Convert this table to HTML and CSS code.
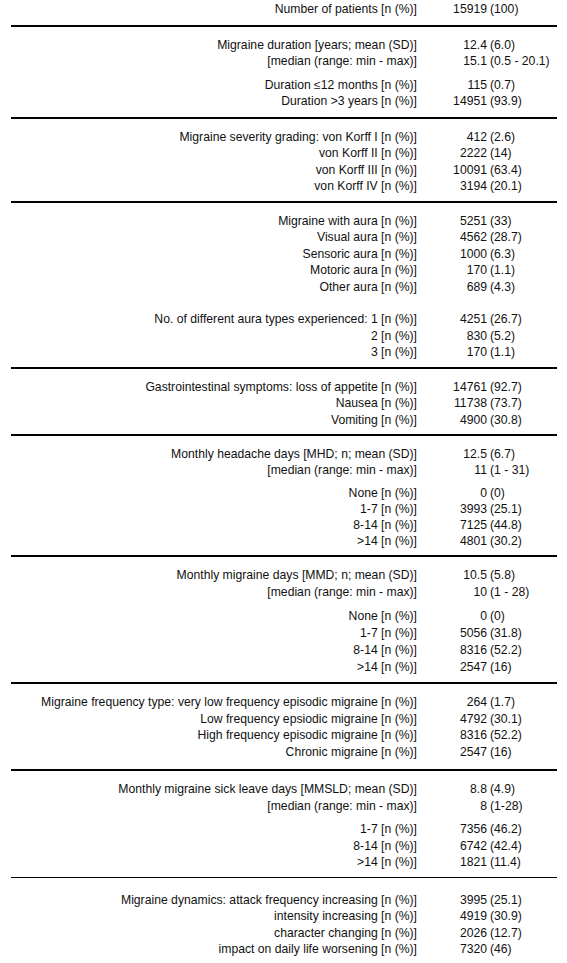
FILE: index.html
```html
<!DOCTYPE html>
<html>
<head>
<meta charset="utf-8">
<link rel="stylesheet" href="styles.css">
</head>
<body>
<div class="table">
  <section class="grp first">
    <div class="row"><span class="lbl">Number of patients [n (%)]</span><span class="num">15919</span><span class="par">(100)</span></div>
  </section>
  <section class="grp duration">
    <div class="row"><span class="lbl">Migraine duration [years; mean (SD)]</span><span class="num">12.4</span><span class="par">(6.0)</span></div>
    <div class="row"><span class="lbl">[median (range: min - max)]</span><span class="num">15.1</span><span class="par">(0.5 - 20.1)</span></div>
    <div class="gap"></div>
    <div class="row"><span class="lbl">Duration ≤12 months [n (%)]</span><span class="num">115</span><span class="par">(0.7)</span></div>
    <div class="row"><span class="lbl">Duration &gt;3 years [n (%)]</span><span class="num">14951</span><span class="par">(93.9)</span></div>
  </section>
  <section class="grp">
    <div class="row"><span class="lbl">Migraine severity grading: von Korff I [n (%)]</span><span class="num">412</span><span class="par">(2.6)</span></div>
    <div class="row"><span class="lbl">von Korff II [n (%)]</span><span class="num">2222</span><span class="par">(14)</span></div>
    <div class="row"><span class="lbl">von Korff III [n (%)]</span><span class="num">10091</span><span class="par">(63.4)</span></div>
    <div class="row"><span class="lbl">von Korff IV [n (%)]</span><span class="num">3194</span><span class="par">(20.1)</span></div>
  </section>
  <section class="grp">
    <div class="row"><span class="lbl">Migraine with aura [n (%)]</span><span class="num">5251</span><span class="par">(33)</span></div>
    <div class="row"><span class="lbl">Visual aura [n (%)]</span><span class="num">4562</span><span class="par">(28.7)</span></div>
    <div class="row"><span class="lbl">Sensoric aura [n (%)]</span><span class="num">1000</span><span class="par">(6.3)</span></div>
    <div class="row"><span class="lbl">Motoric aura [n (%)]</span><span class="num">170</span><span class="par">(1.1)</span></div>
    <div class="row"><span class="lbl">Other aura [n (%)]</span><span class="num">689</span><span class="par">(4.3)</span></div>
    <div class="gap big"></div>
    <div class="row"><span class="lbl">No. of different aura types experienced: 1 [n (%)]</span><span class="num">4251</span><span class="par">(26.7)</span></div>
    <div class="row"><span class="lbl">2 [n (%)]</span><span class="num">830</span><span class="par">(5.2)</span></div>
    <div class="row"><span class="lbl">3 [n (%)]</span><span class="num">170</span><span class="par">(1.1)</span></div>
  </section>
  <section class="grp">
    <div class="row"><span class="lbl">Gastrointestinal symptoms: loss of appetite [n (%)]</span><span class="num">14761</span><span class="par">(92.7)</span></div>
    <div class="row"><span class="lbl">Nausea [n (%)]</span><span class="num">11738</span><span class="par">(73.7)</span></div>
    <div class="row"><span class="lbl">Vomiting [n (%)]</span><span class="num">4900</span><span class="par">(30.8)</span></div>
  </section>
  <section class="grp tight">
    <div class="row"><span class="lbl">Monthly headache days [MHD; n; mean (SD)]</span><span class="num">12.5</span><span class="par">(6.7)</span></div>
    <div class="row"><span class="lbl">[median (range: min - max)]</span><span class="num">11</span><span class="par">(1 - 31)</span></div>
    <div class="gap"></div>
    <div class="row"><span class="lbl">None [n (%)]</span><span class="num">0</span><span class="par">(0)</span></div>
    <div class="row"><span class="lbl">1-7 [n (%)]</span><span class="num">3993</span><span class="par">(25.1)</span></div>
    <div class="row"><span class="lbl">8-14 [n (%)]</span><span class="num">7125</span><span class="par">(44.8)</span></div>
    <div class="row"><span class="lbl">&gt;14 [n (%)]</span><span class="num">4801</span><span class="par">(30.2)</span></div>
  </section>
  <section class="grp loose">
    <div class="row"><span class="lbl">Monthly migraine days [MMD; n; mean (SD)]</span><span class="num">10.5</span><span class="par">(5.8)</span></div>
    <div class="row"><span class="lbl">[median (range: min - max)]</span><span class="num">10</span><span class="par">(1 - 28)</span></div>
    <div class="gap"></div>
    <div class="row"><span class="lbl">None [n (%)]</span><span class="num">0</span><span class="par">(0)</span></div>
    <div class="row"><span class="lbl">1-7 [n (%)]</span><span class="num">5056</span><span class="par">(31.8)</span></div>
    <div class="row"><span class="lbl">8-14 [n (%)]</span><span class="num">8316</span><span class="par">(52.2)</span></div>
    <div class="row"><span class="lbl">&gt;14 [n (%)]</span><span class="num">2547</span><span class="par">(16)</span></div>
  </section>
  <section class="grp freq">
    <div class="row"><span class="lbl">Migraine frequency type: very low frequency episodic migraine [n (%)]</span><span class="num">264</span><span class="par">(1.7)</span></div>
    <div class="row"><span class="lbl">Low frequency epsiodic migraine [n (%)]</span><span class="num">4792</span><span class="par">(30.1)</span></div>
    <div class="row"><span class="lbl">High frequency episodic migraine [n (%)]</span><span class="num">8316</span><span class="par">(52.2)</span></div>
    <div class="row"><span class="lbl">Chronic migraine [n (%)]</span><span class="num">2547</span><span class="par">(16)</span></div>
  </section>
  <section class="grp thin">
    <div class="row"><span class="lbl">Monthly migraine sick leave days [MMSLD; mean (SD)]</span><span class="num">8.8</span><span class="par">(4.9)</span></div>
    <div class="row"><span class="lbl">[median (range: min - max)]</span><span class="num">8</span><span class="par">(1-28)</span></div>
    <div class="gap"></div>
    <div class="row"><span class="lbl">1-7 [n (%)]</span><span class="num">7356</span><span class="par">(46.2)</span></div>
    <div class="row"><span class="lbl">8-14 [n (%)]</span><span class="num">6742</span><span class="par">(42.4)</span></div>
    <div class="row"><span class="lbl">&gt;14 [n (%)]</span><span class="num">1821</span><span class="par">(11.4)</span></div>
  </section>
  <section class="grp last">
    <div class="row"><span class="lbl">Migraine dynamics: attack frequency increasing [n (%)]</span><span class="num">3995</span><span class="par">(25.1)</span></div>
    <div class="row"><span class="lbl">intensity increasing [n (%)]</span><span class="num">4919</span><span class="par">(30.9)</span></div>
    <div class="row"><span class="lbl">character changing [n (%)]</span><span class="num">2026</span><span class="par">(12.7)</span></div>
    <div class="row"><span class="lbl">impact on daily life worsening [n (%)]</span><span class="num">7320</span><span class="par">(46)</span></div>
  </section>
</div>
</body>
</html>
```
FILE: styles.css
```css
html, body {
  margin: 0;
  padding: 0;
  background: #fff;
}
body {
  font-family: "Liberation Sans", Arial, sans-serif;
  font-size: 12.2px;
  color: #111;
}
.table {
  margin-left: 11px;
  width: 546px;
}
.grp {
  padding: 10px 0 6px;
  border-bottom: 2px solid #000;
}
.grp.first {
  padding-top: 1px;
  padding-bottom: 7px;
}
.grp.duration {
  padding-bottom: 7px;
}
.grp.freq {
  padding-bottom: 9px;
}
.grp.thin {
  border-bottom-width: 1px;
}
.grp.last {
  border-bottom: none;
  padding-top: 14px;
}
.row {
  display: grid;
  grid-template-columns: 406px 70px 1fr;
  line-height: 16.5px;
  white-space: nowrap;
}
.grp.tight .row {
  line-height: 16px;
}
.grp.loose .row {
  line-height: 17px;
}
.lbl {
  text-align: right;
}
.num {
  text-align: right;
}
.par {
  padding-left: 3px;
}
.gap {
  height: 7px;
}
.gap.big {
  height: 16px;
}
```
